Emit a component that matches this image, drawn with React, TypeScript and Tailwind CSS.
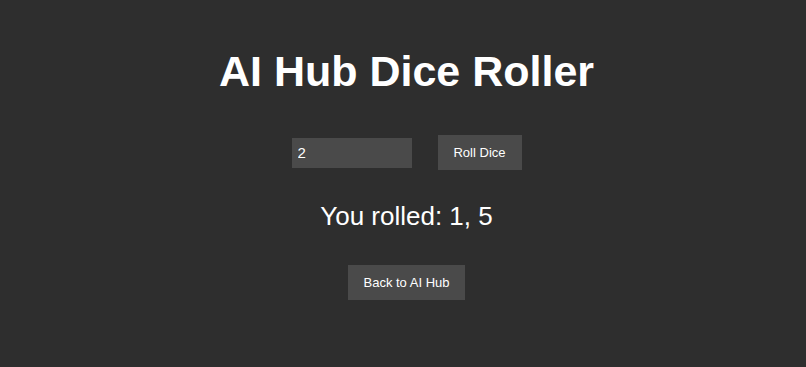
export default function App() {
  return (
    <div
      className="min-h-screen bg-[#2e2e2e] text-white flex flex-col items-center pl-[7px]"
      style={{ fontFamily: '"Liberation Sans", Arial, sans-serif' }}
    >
      <h1 className="mt-[47px] text-[43px] leading-[49px] font-bold">AI Hub Dice Roller</h1>
      <div className="mt-[39px] flex items-center gap-[26px]">
        <input
          type="number"
          defaultValue={2}
          className="w-[120px] h-[30px] bg-[#4a4a4a] text-white text-[15px] px-[6px] outline-none [appearance:textfield]"
        />
        <button className="w-[84px] h-[35px] bg-[#4a4a4a] text-[13px] text-white">Roll Dice</button>
      </div>
      <p className="mt-[31px] text-[26px] leading-[30px]">You rolled: 1, 5</p>
      <button className="mt-[34px] w-[117px] h-[35px] bg-[#4a4a4a] text-[13px] text-white">
        Back to AI Hub
      </button>
    </div>
  );
}
